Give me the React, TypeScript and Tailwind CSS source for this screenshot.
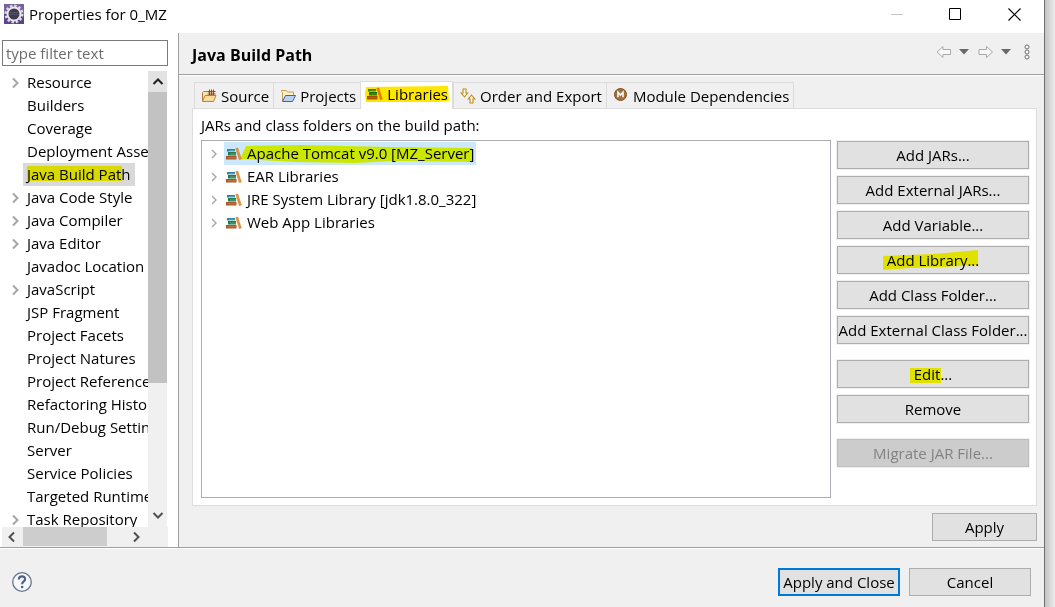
import React from "react";

const treeItems: { label: string; expandable?: boolean; selected?: boolean }[] = [
  { label: "Resource", expandable: true },
  { label: "Builders" },
  { label: "Coverage" },
  { label: "Deployment Assembly" },
  { label: "Java Build Path", selected: true },
  { label: "Java Code Style", expandable: true },
  { label: "Java Compiler", expandable: true },
  { label: "Java Editor", expandable: true },
  { label: "Javadoc Location" },
  { label: "JavaScript", expandable: true },
  { label: "JSP Fragment" },
  { label: "Project Facets" },
  { label: "Project Natures" },
  { label: "Project References" },
  { label: "Refactoring History" },
  { label: "Run/Debug Settings" },
  { label: "Server" },
  { label: "Service Policies" },
  { label: "Targeted Runtimes" },
  { label: "Task Repository", expandable: true },
];

const libraries = [
  "Apache Tomcat v9.0 [MZ_Server]",
  "EAR Libraries",
  "JRE System Library [jdk1.8.0_322]",
  "Web App Libraries",
];

function EclipseIcon() {
  return (
    <svg width="20" height="20" viewBox="0 0 20 20" aria-hidden="true">
      <rect width="20" height="20" fill="#75639a" />
      <rect y="10" width="20" height="10" fill="#5b4485" />
      <circle cx="10" cy="10" r="8.300" fill="none" stroke="#dedce2" strokeWidth="2.400" strokeDasharray="2.400 1.946" />
      <circle cx="10" cy="10" r="6.500" fill="#3f3a52" stroke="#e8e6ea" strokeWidth="2" />
      <path d="M5.500 8.500h9M5 10.500h10" stroke="#5d5873" strokeWidth=".8" />
    </svg>
  );
}

function Chevron({ dir, thin, className }: { dir: "up" | "down" | "left" | "right"; thin?: boolean; className?: string }) {
  const paths = {
    up: "M1.500 8 6 3.500l4.500 4.500",
    down: "M1.500 4 6 8.500l4.500-4.500",
    left: "M8 1.500 3.500 6 8 10.500",
    right: "M4 1.500 8.500 6 4 10.500",
  };
  return (
    <svg width="12" height="12" viewBox="0 0 12 12" className={className} aria-hidden="true">
      <path d={thin ? "M4 2 8 6l-4 4" : paths[dir]} fill="none" stroke="currentColor" strokeWidth={thin ? 1.4 : 2} />
    </svg>
  );
}

function BooksIcon({ top = "#2e86a8" }: { top?: string }) {
  return (
    <svg width="16" height="16" viewBox="0 0 16 16" className="shrink-0" aria-hidden="true">
      <path d="M1 3h8v2.500H1z" fill={top} />
      <path d="M3 5.200h6" stroke="#d9ecd5" strokeWidth=".6" />
      <path d="M2 6h8v3.500H2z" fill="#1f7a4c" />
      <path d="M4 8h6" stroke="#a9d6b0" strokeWidth=".5" />
      <path d="M0 10h10.500v3.500H0z" fill="#a5542a" />
      <path d="M1.500 11.800h9" stroke="#cf8a55" strokeWidth=".8" />
      <path d="M9.800 2.500 11.800 2l3.500 11-2.100.6z" fill="#e8953a" stroke="#c4751f" strokeWidth=".5" />
    </svg>
  );
}

function SourceIcon() {
  return (
    <svg width="16" height="16" viewBox="0 0 16 16" className="shrink-0" aria-hidden="true">
      <path d="M1.500 13v-8.500l1-1h4l1 1h5v3" fill="#fbe5b0" stroke="#b47b3c" />
      <path d="M7.500 2.500h6v5h-6z" fill="#f3d2a4" />
      <path d="M6.500 3.500h8M6.500 6h8M8.500 1.500v6M10.500 1.500v6M12.500 1.500v6" fill="none" stroke="#7a4032" strokeWidth=".9" />
      <path d="M1.500 13.500l2.500-6h11l-2.500 6z" fill="#fbdc98" stroke="#b8843c" />
    </svg>
  );
}

function FolderIcon() {
  return (
    <svg width="16" height="16" viewBox="0 0 16 16" className="shrink-0" aria-hidden="true">
      <path d="M2.500 13V4.500l-1-1v-1h5l1 1.500h6v4" fill="#fdf0c4" stroke="#c39a58" />
      <path d="M2.500 13.500l3-6h10l-3 6z" fill="#bcd2f3" stroke="#3e63ae" />
    </svg>
  );
}

function OrderIcon() {
  return (
    <svg width="16" height="16" viewBox="0 0 16 16" className="shrink-0" aria-hidden="true">
      <path d="M3 1h3v4h1.700L4.500 9 1.200 5H3z" fill="#fff7dc" stroke="#bb8a28" strokeWidth="1.100" />
      <path d="M10 15h3v-4h1.800l-3.300-4-3.300 4H10z" fill="#fff7dc" stroke="#bb8a28" strokeWidth="1.100" />
    </svg>
  );
}

function ModuleIcon() {
  return (
    <svg width="16" height="16" viewBox="0 0 16 16" className="shrink-0" aria-hidden="true">
      <circle cx="7.500" cy="6.500" r="6" fill="#a4703e" stroke="#7d4f26" />
      <path d="M5 9.200v-5L7.500 7 10 4.200v5" fill="none" stroke="#fff" strokeWidth="1.500" />
    </svg>
  );
}

function Marker({ d, color, w, h, className }: { d: string; color: string; w: number; h: number; className: string }) {
  return (
    <svg width={w} height={h} viewBox={`0 0 ${w} ${h}`} className={"pointer-events-none absolute mix-blend-multiply " + className} aria-hidden="true">
      <path d={d} fill={color} />
    </svg>
  );
}

function Push({ children, disabled }: { children: React.ReactNode; disabled?: boolean }) {
  return (
    <button
      type="button"
      disabled={disabled}
      className="flex h-7 w-full items-center justify-center border border-[#adadad] bg-[#e1e1e1] whitespace-nowrap outline outline-[#f0f0f0] disabled:border-[#bfbfbf] disabled:bg-[#cccccc] disabled:text-[#838383]"
    >
      {children}
    </button>
  );
}

function Tab({ icon, label, active }: { icon: React.ReactNode; label: string; active?: boolean }) {
  return (
    <button
      type="button"
      role="tab"
      aria-selected={!!active}
      className={
        active
          ? "relative -mb-px flex h-7 items-center gap-1 border border-b-0 border-[#dcdcdc] bg-white pr-1 pb-1 pl-1.5 whitespace-nowrap"
          : "-mr-px flex h-[26px] items-center gap-1 border border-b-0 border-[#dcdcdc] bg-[#f0f0f0] pr-1 pl-1.5 whitespace-nowrap"
      }
    >
      {icon}
      {label}
      {active && <Marker w={84} h={17} color="#ffe600" className="top-1 left-1" d="M1 1 83 0l1 15-12 1H1L0 8z" />}
    </button>
  );
}

export default function App() {
  return (
    <div className="flex h-screen overflow-hidden bg-white font-['Open_Sans','Noto_Sans',sans-serif] text-[15px] leading-5 text-black">
      <div className="flex min-w-0 flex-1 flex-col border-r border-[#6f6f6f] bg-[#f0f0f0]">
        <header className="flex h-[33px] shrink-0 items-center bg-white pb-[5px] pl-1">
          <EclipseIcon />
          <h1 className="ml-[5px] flex-1">Properties for 0_MZ</h1>
          <button type="button" aria-label="Minimize" className="flex w-[58px] justify-center">
            <svg width="13" height="13"><path d="M0 6.500h12" stroke="#c4c4c4" /></svg>
          </button>
          <button type="button" aria-label="Maximize" className="flex w-[58px] justify-center">
            <svg width="13" height="13"><path d="M.5.5h11v11H.5z" fill="none" stroke="#000" /></svg>
          </button>
          <button type="button" aria-label="Close" className="flex w-[60px] justify-center">
            <svg width="13" height="13"><path d="m.5.5 12 12m0-12-12 12" stroke="#000" strokeWidth="1.100" /></svg>
          </button>
        </header>

        <div className="flex min-h-0 flex-1">
          <aside className="flex w-[179px] shrink-0 flex-col border-r border-[#a0a0a0] bg-white pt-[7px] pr-2.5 pl-0.5">
            <input
              type="text"
              aria-label="Filter"
              placeholder="type filter text"
              className="h-[26px] w-full shrink-0 border border-[#7a7a7a] bg-white px-[3px] outline-none placeholder:text-[#6d6d6d]"
            />
            <div className="mt-[5px] flex min-h-0 flex-1 pr-px">
              <ul className="min-w-0 flex-1 overflow-hidden">
                {treeItems.map((item) => (
                  <li key={item.label} className="flex h-[23px] items-center leading-[23px] whitespace-nowrap">
                    <span className="flex w-[21px] shrink-0 justify-center pl-1 text-[#a6a6a6]">
                      {item.expandable && <Chevron dir="right" />}
                    </span>
                    <span className={item.selected ? "relative bg-[#d9d9d9] px-1" : "px-1"}>
                      {item.label}
                      {item.selected && <Marker w={95} h={15} color="#ffff00" className="top-[3px] left-1" d="M0 0h95v15H0z" />}
                    </span>
                  </li>
                ))}
              </ul>
              <div className="flex w-[19px] shrink-0 flex-col items-center bg-[#f0f0f0]">
                <div className="flex h-[21px] w-full shrink-0 items-center justify-center bg-[#e3e3e3]">
                  <Chevron dir="up" className="text-[#202020]" />
                </div>
                <div className="w-full flex-[294] bg-[#c2c2c2]" />
                <div className="flex flex-[140] items-end pb-1.5 text-[#505050]">
                  <Chevron dir="down" />
                </div>
              </div>
            </div>
            <div className="flex h-5 shrink-0 bg-[#f0f0f0] pb-px text-[#505050]">
              <div className="flex w-[21px] items-center pl-1"><Chevron dir="left" /></div>
              <div className="w-[84px] bg-[#cdcdcd]" />
              <div className="flex flex-1 items-center justify-end pr-[26px]"><Chevron dir="right" /></div>
            </div>
          </aside>

          <main className="flex min-w-0 flex-1 flex-col">
            <div className="flex h-[42px] shrink-0 items-center border-b border-[#a0a0a0] pr-3.5 pl-[13px]">
              <h2 className="flex-1 pt-0.5 text-base font-bold">Java Build Path</h2>
              <div className="flex items-center pb-1">
                <button type="button" aria-label="Back">
                  <svg width="16" height="14"><path d="M1 7 7 1.500v3h7.500v5H7v3z" fill="#f7f7f7" stroke="#a9a9a9" /></svg>
                </button>
                <button type="button" aria-label="Back history" className="ml-[7px]">
                  <svg width="11" height="6"><path d="M0 0h10L5 5.500z" fill="#68696d" /></svg>
                </button>
                <button type="button" aria-label="Forward" className="ml-2">
                  <svg width="16" height="14"><path d="M14.500 7l-6-5.500v3H1v5h7.500v3z" fill="#f7f7f7" stroke="#a9a9a9" /></svg>
                </button>
                <button type="button" aria-label="Forward history" className="ml-[7px]">
                  <svg width="11" height="6"><path d="M0 0h10L5 5.500z" fill="#68696d" /></svg>
                </button>
                <button type="button" aria-label="View menu" className="ml-3">
                  <svg width="6" height="16" fill="#fff" stroke="#6e6e6e">
                    <circle cx="3" cy="3" r="2" /><circle cx="3" cy="8" r="2" /><circle cx="3" cy="13" r="2" />
                  </svg>
                </button>
              </div>
            </div>

            <div className="flex min-h-0 flex-1 flex-col border-t border-white pt-[5px] pr-[7px] pb-1.5 pl-[13px]">
              <div role="tablist" className="flex items-end pl-0.5">
                <Tab icon={<SourceIcon />} label="Source" />
                <Tab icon={<FolderIcon />} label="Projects" />
                <Tab icon={<BooksIcon top="#3f8a1e" />} label="Libraries" active />
                <Tab icon={<OrderIcon />} label="Order and Export" />
                <Tab icon={<ModuleIcon />} label="Module Dependencies" />
              </div>
              <section className="flex min-h-0 flex-1 flex-col border border-[#dcdcdc] bg-white pt-1.5 pr-[7px] pb-[7px] pl-2">
                <p className="mb-[5px] leading-5">JARs and class folders on the build path:</p>
                <div className="flex min-h-0 flex-1 gap-1.5">
                  <ul className="min-w-0 flex-1 border border-[#abadb3] pt-px pl-1.5 leading-[23px]">
                    {libraries.map((name, i) => (
                      <li key={name} className="flex h-[23px] items-center">
                        <Chevron dir="right" thin className="mr-1 shrink-0 text-[#a6a6a6]" />
                        <span className={i === 0 ? "relative flex items-center gap-[5px] bg-[#cce8ff] px-0.5" : "flex items-center gap-[5px] px-0.5"}>
                          <BooksIcon />
                          {name}
                          {i === 0 && <Marker w={232} h={18} color="#ffff00" className="top-[3px] left-4" d="M6 1 60 0l90 2 82 1v14l-77-1-40 2-60-1-55-3z" />}
                        </span>
                      </li>
                    ))}
                  </ul>
                  <div className="flex w-48 shrink-0 flex-col gap-[7px] pt-px">
                    <Push>Add JARs...</Push>
                    <Push>Add External JARs...</Push>
                    <Push>Add Variable...</Push>
                    <Push>
                      <span className="relative">
                        Add Library...
                        <Marker w={96} h={20} color="#ffff00" className="top-0 -left-1" d="M0 6 50 4 95 0v15l-34 2-35 1-26 2z" />
                      </span>
                    </Push>
                    <Push>Add Class Folder...</Push>
                    <Push>Add External Class Folder...</Push>
                    <div className="h-0.5" />
                    <Push>
                      <span className="relative">
                        Edit...
                        <Marker w={31} h={15} color="#ffff00" className="top-1 -left-1" d="M0 0h31v15H0z" />
                      </span>
                    </Push>
                    <Push>Remove</Push>
                    <div className="h-0.5" />
                    <Push disabled>Migrate JAR File...</Push>
                  </div>
                </div>
              </section>
              <div className="mt-[7px] flex justify-end">
                <div className="w-[105px]"><Push>Apply</Push></div>
              </div>
            </div>
          </main>
        </div>

        <footer className="flex h-[60px] shrink-0 items-center border-t border-[#a0a0a0] pt-2 pr-[13px] pl-3 shadow-[inset_0_1px_0_#fff]">
          <div className="flex-1">
            <button type="button" aria-label="Help" className="block">
              <svg width="20" height="20" viewBox="0 0 20 20">
                <circle cx="10" cy="10" r="9.300" fill="#f6f7fa" stroke="#66758f" strokeWidth="1.300" />
                <path d="M6.800 7.600c0-4.300 6.600-4.100 6.300-.3-.2 2.100-3 2.200-3 4.900" fill="none" stroke="#4e5f80" strokeWidth="2.100" />
                <circle cx="10.100" cy="15" r="1.300" fill="#4e5f80" />
              </svg>
            </button>
          </div>
          <button type="button" className="h-7 w-[122px] border-2 border-[#0078d7] bg-[#e1e1e1] whitespace-nowrap">Apply and Close</button>
          <button type="button" className="ml-[9px] h-7 w-[122px] border border-[#adadad] bg-[#e1e1e1]">Cancel</button>
        </footer>
      </div>
      <div className="w-2.5 shrink-0 bg-linear-to-r from-[#c4c4c4] to-[#ececec]" />
    </div>
  );
}
